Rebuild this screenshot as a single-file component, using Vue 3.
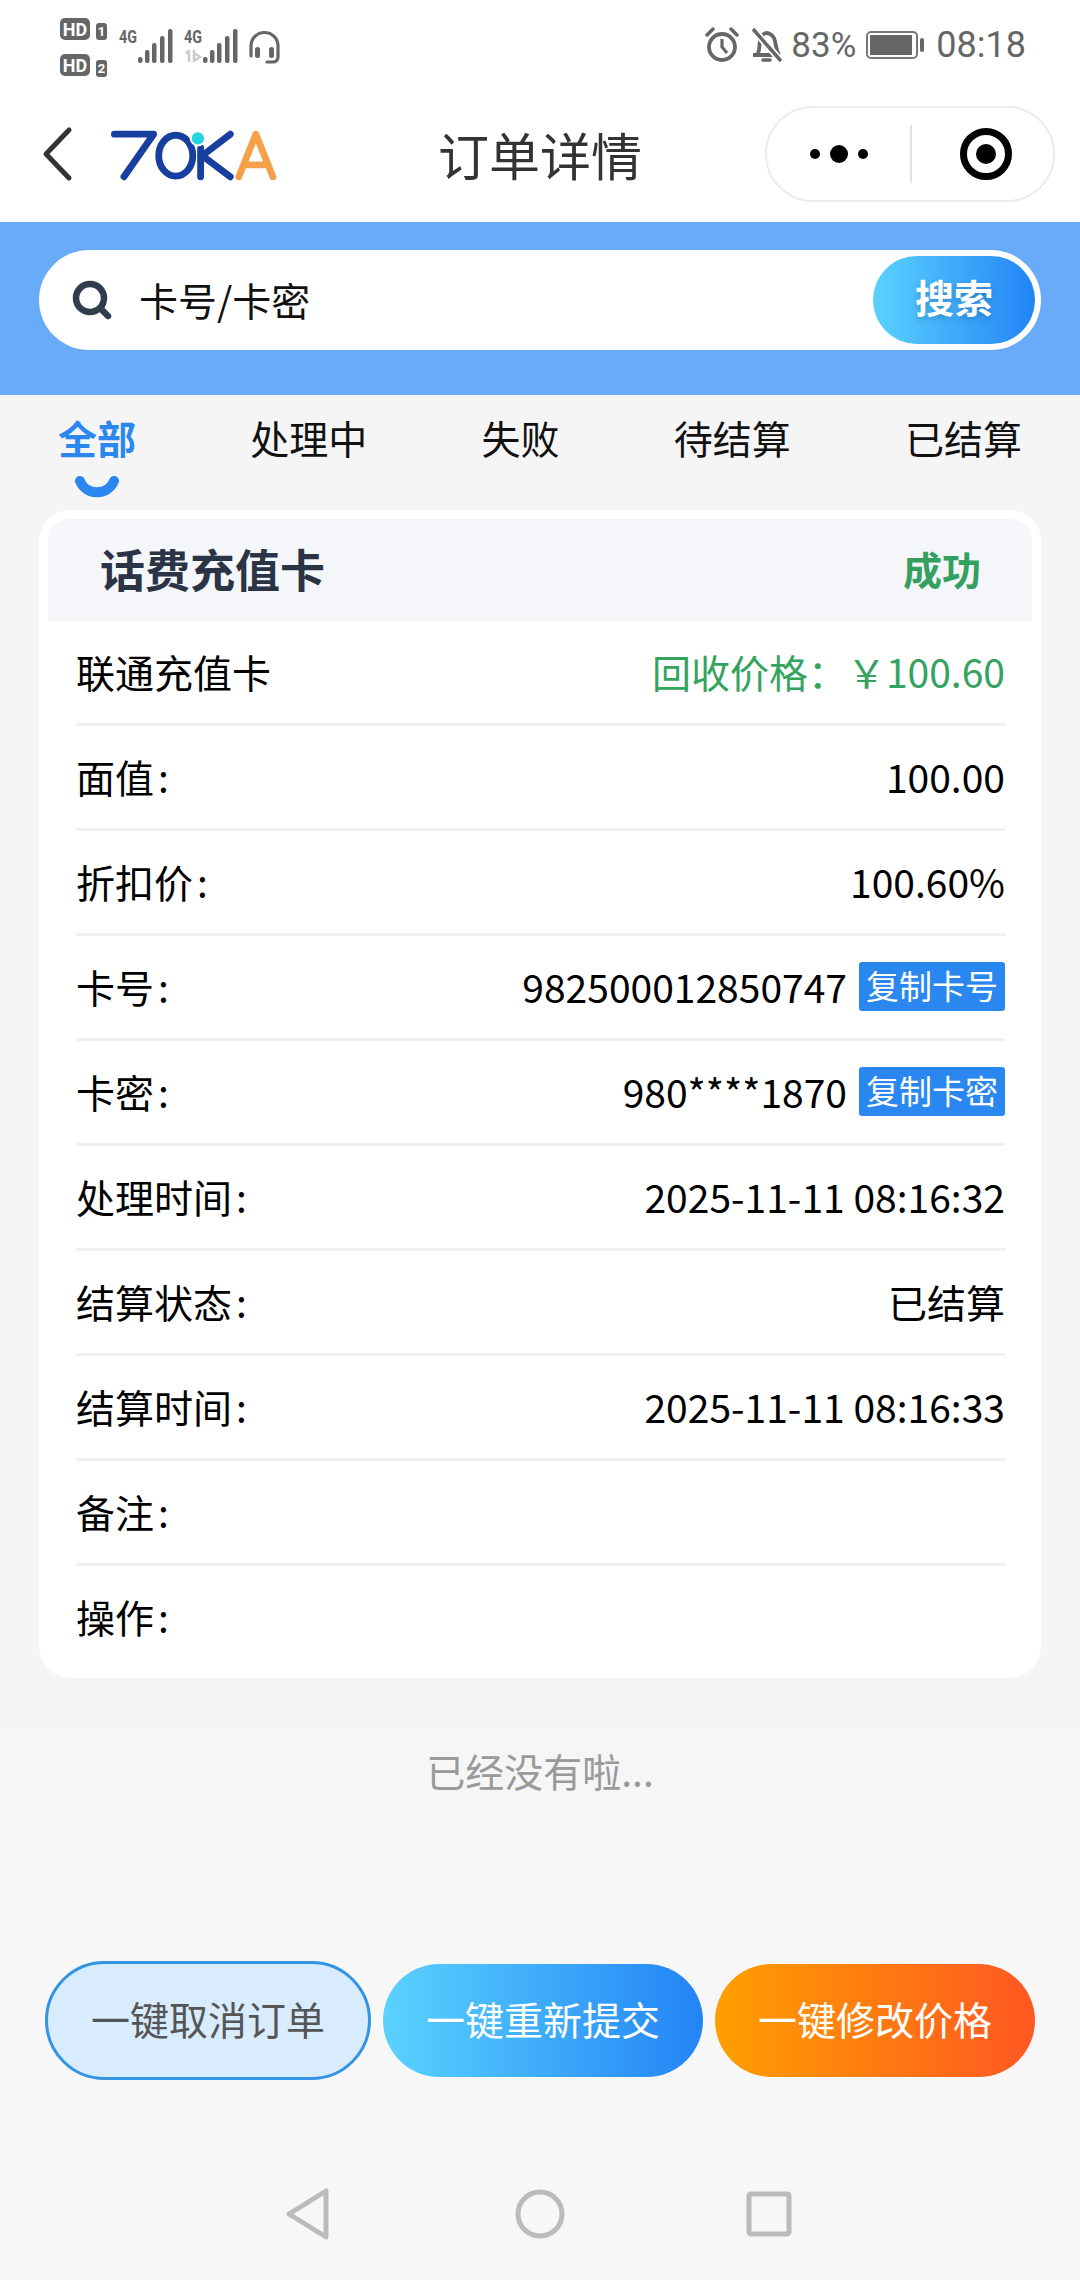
<script setup>
const tabs = ['全部', '处理中', '失败', '待结算', '已结算']
const rows = [
  { label: '面值', value: '100.00' },
  { label: '折扣价', value: '100.60%' },
  { label: '卡号', value: '982500012850747', tag: '复制卡号' },
  { label: '卡密', value: '980****1870', tag: '复制卡密' },
  { label: '处理时间', value: '2025-11-11 08:16:32' },
  { label: '结算状态', value: '已结算' },
  { label: '结算时间', value: '2025-11-11 08:16:33' },
  { label: '备注', value: '' },
  { label: '操作', value: '' }
]
</script>

<template>
  <div class="page">
    <div class="status">
      <svg class="st-left" width="225" height="70" viewBox="60 10 225 70">
        <rect x="60" y="18" width="30" height="22" rx="5" fill="#666" />
        <text x="75" y="35.500" class="hd">HD</text>
        <rect x="96" y="23" width="11" height="17" rx="3" fill="#666" />
        <text x="101.500" y="36" class="num">1</text>
        <rect x="60" y="54" width="30" height="22" rx="5" fill="#666" />
        <text x="75" y="71.500" class="hd">HD</text>
        <rect x="96" y="60" width="11" height="17" rx="3" fill="#666" />
        <text x="101.500" y="73" class="num">2</text>
        <text x="119" y="43" class="g4" textLength="18" lengthAdjust="spacingAndGlyphs">4G</text>
        <g fill="#666">
          <rect x="138" y="57" width="4.500" height="6" rx="2" />
          <rect x="145" y="50" width="4.500" height="13" rx="2" />
          <rect x="152" y="43" width="4.500" height="20" rx="2" />
          <rect x="160" y="36" width="4.500" height="27" rx="2" />
          <rect x="168" y="29" width="4.500" height="34" rx="2" />
        </g>
        <text x="184" y="43" class="g4" textLength="18" lengthAdjust="spacingAndGlyphs">4G</text>
        <path d="M189 50v12M186 54l3-4M194 50v12M194 53l6 4-6 4" fill="none" stroke="#ccc" stroke-width="2.500" />
        <g fill="#666">
          <rect x="203" y="57" width="4.500" height="6" rx="2" />
          <rect x="210" y="50" width="4.500" height="13" rx="2" />
          <rect x="217" y="43" width="4.500" height="20" rx="2" />
          <rect x="225" y="36" width="4.500" height="27" rx="2" />
          <rect x="233" y="29" width="4.500" height="34" rx="2" />
        </g>
        <path d="M251 56v-10a13.500 13.500 0 0 1 27 0v11a5 5 0 0 1-5 5h-6" fill="none" stroke="#666" stroke-width="3.200" stroke-linecap="round" />
        <rect x="255" y="47" width="5" height="11" rx="2.500" fill="#666" />
        <rect x="269" y="47" width="5" height="11" rx="2.500" fill="#666" />
      </svg>
      <div class="st-right">
        <svg width="34" height="36" viewBox="0 0 34 36">
          <circle cx="17" cy="20" r="13" fill="none" stroke="#666" stroke-width="3.800" />
          <path d="M17 12v8l5 6" fill="none" stroke="#666" stroke-width="3.200" />
          <path d="M2 8l6-6M32 8l-6-6" fill="none" stroke="#666" stroke-width="3.500" stroke-linecap="round" />
        </svg>
        <svg class="bell" width="34" height="36" viewBox="0 0 34 36">
          <path d="M3 28h27M7 28c3-4 2-8 3-14 1-5 4-8 7-8s7 3 8 8c1 5 1 9 4 14" fill="none" stroke="#666" stroke-width="3.800" stroke-linejoin="round" />
          <path d="M13 33h7" stroke="#666" stroke-width="3.500" stroke-linecap="round" />
          <path d="M3 2l28 32" stroke="#fff" stroke-width="7" />
          <path d="M3 2l28 32" stroke="#666" stroke-width="3.500" />
        </svg>
        <span class="pct">83%</span>
        <span class="battery"><span class="battery-fill"></span></span>
        <span class="battery-tip"></span>
        <span class="clock">08:18</span>
      </div>
    </div>

    <div class="nav">
      <svg class="back" width="34" height="56" viewBox="0 0 34 56">
        <path d="M28 4L5 28l23 24" fill="none" stroke="#333" stroke-width="5" stroke-linecap="round" stroke-linejoin="round" />
      </svg>
      <svg class="logo" width="167" height="53" viewBox="320 390 490 155">
        <path d="M330 405H445L358 530" fill="none" stroke="#173f9f" stroke-width="20" stroke-linecap="round" stroke-linejoin="round" />
        <ellipse cx="510" cy="468" rx="50" ry="60" fill="none" stroke="#173f9f" stroke-width="20" />
        <path d="M583 445V530M670 405L588 468L670 530" fill="none" stroke="#173f9f" stroke-width="20" stroke-linecap="round" stroke-linejoin="round" />
        <circle cx="575" cy="417" r="24" fill="#fff" />
        <circle cx="575" cy="417" r="18" fill="#26d3e0" />
        <path d="M695 530L745 405L795 530M715 495H775" fill="none" stroke="#f6a04a" stroke-width="20" stroke-linecap="round" stroke-linejoin="round" />
      </svg>
      <div class="title">订单详情</div>
      <div class="capsule">
        <span class="dots"><i class="d-s"></i><i class="d-l"></i><i class="d-s"></i></span>
        <span class="cap-line"></span>
        <span class="target"><i></i></span>
      </div>
    </div>

    <div class="search-wrap">
      <div class="search">
        <svg class="s-icon" width="40" height="40" viewBox="0 0 40 40">
          <circle cx="18" cy="18" r="14" fill="none" stroke="#2f3d4e" stroke-width="6.500" />
          <path d="M29 29l7 7" stroke="#2f3d4e" stroke-width="6.500" stroke-linecap="round" />
        </svg>
        <span class="placeholder">卡号/卡密</span>
        <span class="s-btn">搜索</span>
      </div>
    </div>

    <div class="tabs">
      <div v-for="(t, i) in tabs" :key="t" class="tab" :class="{ on: i === 0 }">
        {{ t }}
        <svg v-if="i === 0" class="smile" width="44" height="24" viewBox="0 0 44 24">
          <path d="M5 5c6 15 28 15 34 0" fill="none" stroke="#2a87ef" stroke-width="10" stroke-linecap="round" />
        </svg>
      </div>
    </div>

    <div class="card">
      <div class="card-head">
        <span class="card-title">话费充值卡</span>
        <span class="card-state">成功</span>
      </div>
      <div class="row">
        <span>联通充值卡</span>
        <span class="green">回收价格：￥100.60</span>
      </div>
      <div v-for="r in rows" :key="r.label" class="row">
        <span>{{ r.label }}<span class="colon">:</span></span>
        <span class="val">
          {{ r.value }}
          <span v-if="r.tag" class="tag">{{ r.tag }}</span>
        </span>
      </div>
    </div>

    <div class="end">已经没有啦...</div>
    <div class="spacer"></div>

    <div class="actions">
      <div class="act a-cancel">一键取消订单</div>
      <div class="act a-resub">一键重新提交</div>
      <div class="act a-price">一键修改价格</div>
    </div>

    <div class="sysnav">
      <svg width="44" height="52" viewBox="0 0 44 52">
        <path d="M40 3v46L3 26z" fill="none" stroke="#bbb" stroke-width="5" stroke-linejoin="round" />
      </svg>
      <svg class="home" width="50" height="50" viewBox="0 0 50 50">
        <circle cx="25" cy="25" r="22" fill="none" stroke="#bbb" stroke-width="5" />
      </svg>
      <svg width="46" height="46" viewBox="0 0 46 46">
        <rect x="3" y="3" width="40" height="40" rx="2" fill="none" stroke="#bbb" stroke-width="5" />
      </svg>
    </div>
  </div>
</template>

<style scoped>
.page {
  width: 1080px;
  height: 2280px;
  overflow: hidden;
  display: flex;
  flex-direction: column;
  background: linear-gradient(#f5f5f5 1700px, #f7f7f7 1900px);
  color: #000;
  font-family: "Noto Sans CJK SC", "Noto Sans", sans-serif;
}
.status {
  height: 90px;
  background: #fff;
  display: flex;
  justify-content: space-between;
  padding: 10px 54px 0 60px;
  box-sizing: border-box;
}
.st-left { display: block; }
.hd { font: 700 18px "Roboto", sans-serif; fill: #fff; text-anchor: middle; }
.num { font: 700 13px "Roboto", sans-serif; fill: #fff; text-anchor: middle; }
.g4 { font: 700 19px "Roboto", sans-serif; fill: #666; }
.st-right {
  display: flex;
  align-items: center;
  height: 70px;
  color: #666;
  font: 400 35px "Roboto", sans-serif;
}
.bell { margin-left: 11px; }
.pct { margin-left: 7px; }
.battery {
  width: 52px;
  height: 28px;
  margin-left: 10px;
  border: 2px solid #777;
  border-radius: 5px;
  box-sizing: border-box;
  padding: 2px;
  display: block;
}
.battery-fill { display: block; width: 42px; height: 100%; background: #666; }
.battery-tip { width: 4px; height: 14px; margin-left: 2px; border-radius: 2px; background: #666; }
.clock { margin-left: 12px; font-size: 36px; }

.nav {
  height: 132px;
  background: #fff;
  position: relative;
  display: flex;
  align-items: center;
  padding: 0 25px 0 41px;
  box-sizing: border-box;
}
.back { margin-top: -5px; }
.logo { margin-left: 36px; margin-top: -1px; }
.title {
  position: absolute;
  left: 0;
  right: 0;
  top: 33px;
  text-align: center;
  font-size: 51px;
  line-height: 62px;
  color: #333;
}
.capsule {
  margin-left: auto;
  margin-top: -4px;
  width: 290px;
  height: 96px;
  border: 2px solid #ececec;
  border-radius: 48px;
  box-sizing: border-box;
  display: flex;
  align-items: center;
  background: #fff;
}
.dots { width: 143px; display: flex; justify-content: center; align-items: center; gap: 10px; }
.dots i { display: block; border-radius: 50%; background: #000; }
.d-s { width: 10px; height: 10px; }
.d-l { width: 18px; height: 18px; }
.cap-line { width: 2px; height: 58px; background: #e2e2e2; }
.target {
  width: 52px;
  height: 52px;
  margin-left: 48px;
  border: 7px solid #000;
  border-radius: 50%;
  box-sizing: border-box;
  display: flex;
  align-items: center;
  justify-content: center;
}
.target i { display: block; width: 20px; height: 20px; border-radius: 50%; background: #000; }

.search-wrap {
  height: 173px;
  background: #69abf9;
  padding: 28px 39px 0;
  box-sizing: border-box;
}
.search {
  height: 100px;
  border-radius: 50px;
  background: #fff;
  display: flex;
  align-items: center;
  padding: 0 6px 0 33px;
}
.placeholder { margin-left: 27px; margin-top: -3px; font-size: 39px; color: #111; }
.s-btn {
  margin-left: auto;
  width: 162px;
  height: 88px;
  border-radius: 44px;
  display: flex;
  align-items: center;
  justify-content: center;
  padding-bottom: 8px;
  box-sizing: border-box;
  color: #fff;
  font-size: 39px;
  font-weight: 700;
  text-shadow: 0 3px 6px rgba(0, 0, 0, 0.18);
  background: linear-gradient(90deg, #5ad2ff, #2284f5);
}

.tabs {
  height: 115px;
  display: flex;
  justify-content: space-between;
  padding: 13px 58px 0;
  box-sizing: border-box;
}
.tab {
  font-size: 39px;
  line-height: 58px;
  color: #111;
  display: flex;
  flex-direction: column;
  align-items: center;
}
.tab.on { color: #2a87ef; font-weight: 700; }
.smile { display: block; margin-top: 10px; }

.card {
  margin: 0 39px;
  padding: 9px 9px 7px;
  background: #fff;
  border-radius: 32px;
}
.card-head {
  height: 102px;
  background: #f4f6fa;
  border-radius: 22px 22px 0 0;
  display: flex;
  align-items: center;
  justify-content: space-between;
  padding: 0 51px 4px 52px;
  box-sizing: border-box;
}
.card-title { font-size: 45px; font-weight: 700; color: #2a3444; }
.card-state { font-size: 39px; font-weight: 700; color: #34a05f; }
.row {
  height: 105px;
  margin: 0 27px 0 28px;
  padding-bottom: 2px;
  box-sizing: border-box;
  display: flex;
  align-items: center;
  justify-content: space-between;
  font-size: 39px;
  color: #000;
  border-bottom: 3px solid #f0f0f0;
}
.row:last-child { border-bottom: 0; padding-bottom: 5px; }
.colon { margin-left: 4px; }
.green { color: #34a360; }
.val { display: flex; align-items: center; }
.tag {
  margin-left: 12px;
  width: 146px;
  height: 49px;
  border-radius: 3px;
  background: #2a87ef;
  color: #fff;
  font-size: 33px;
  line-height: 47px;
  text-align: center;
}
.end {
  margin-top: 62px;
  text-align: center;
  color: #999;
  font-size: 39px;
  line-height: 60px;
}
.spacer { flex: 1; }
.actions {
  display: flex;
  align-items: center;
  gap: 12px;
  padding: 0 45px;
}
.act {
  flex: 1;
  height: 113px;
  padding-bottom: 6px;
  box-sizing: border-box;
  border-radius: 57px;
  display: flex;
  align-items: center;
  justify-content: center;
  color: #fff;
  font-size: 39px;
}
.a-cancel {
  flex: none;
  width: 326px;
  height: 119px;
  border: 3px solid #3394e4;
  background: #d8ecfe;
  color: #555;
  border-radius: 60px;
}
.a-resub { background: linear-gradient(90deg, #5ad2ff, #2284f5); }
.a-price { background: linear-gradient(90deg, #ff9f00, #ff5722); }
.sysnav {
  height: 132px;
  margin-top: 68px;
  display: flex;
  align-items: center;
  padding: 0 288px 0 286px;
  justify-content: space-between;
}
.home { margin-left: 4px; }
</style>

<style>
html, body { margin: 0; padding: 0; background: #f5f5f5; }
</style>
